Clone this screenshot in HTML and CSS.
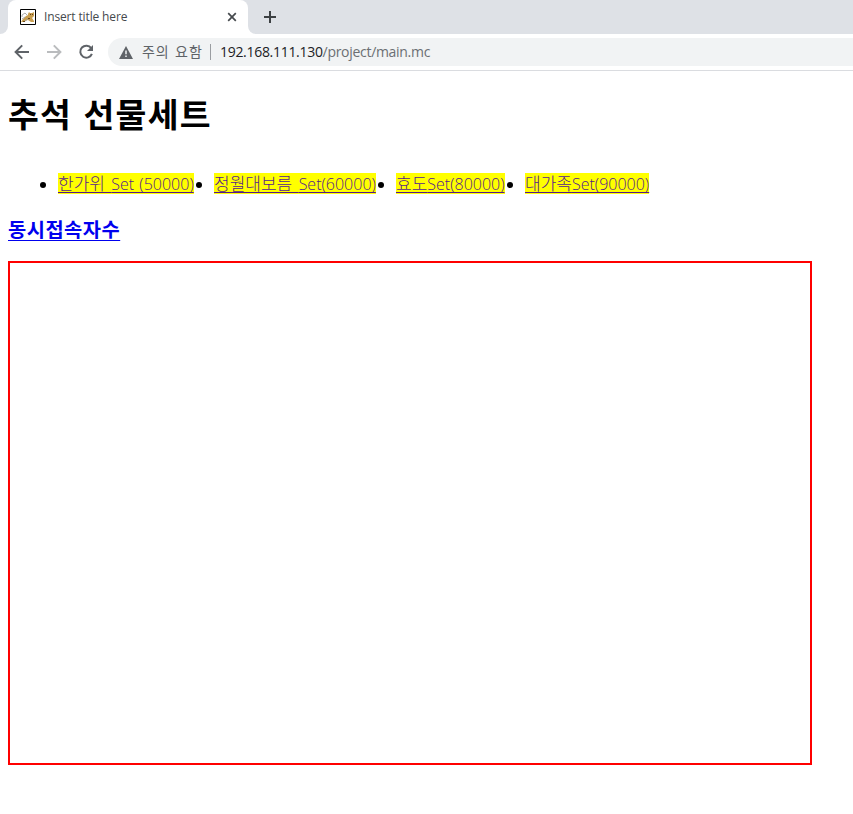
FILE: index.html
```html
<!DOCTYPE html>
<html lang="ko">
<head>
<meta charset="utf-8">
<title>Insert title here</title>
<link rel="stylesheet" href="styles.css">
</head>
<body>
<header class="browser">
  <div class="tabstrip">
    <div class="edge"></div>
    <div class="tab">
      <svg class="favicon" width="16" height="16" viewBox="0 0 16 16"><path fill="#fff" stroke="#000" d="M.5.5h15v15H.5z"/><path fill="#c99f51" d="M8 5l1-2 1 1h2l2-1v4l-2 2 2 3v1h-3l-3-2-3 1-2 1H1l2-3 3-3 2-1z"/><path fill="none" stroke="#999" stroke-width=".8" d="M2 8V6l3-2 2 2M2 10l3-2M5 12l3-2"/><path fill="#65431c" d="M10 5h1v1h-1zM12 5h1v1h-1zM8 9h2v1H8zM3 12h2v1H3z"/></svg>
      <span class="tab-title">Insert title here</span>
      <svg class="close" width="10" height="10" viewBox="0 0 10 10"><path d="M1.2 1.2l7.6 7.6M8.8 1.2L1.2 8.8" stroke="#45494d" stroke-width="1.7"/></svg>
    </div>
    <div class="rest"><svg width="12" height="12" viewBox="0 0 12 12"><path d="M6 0v12M0 6h12" stroke="#3c4043" stroke-width="2"/></svg></div>
  </div>
  <div class="toolbar">
    <svg class="nav" width="16" height="16" viewBox="0 0 16 16"><path d="M15 8H2M8.2 1.4L1.6 8l6.6 6.6" fill="none" stroke="#5f6368" stroke-width="2"/></svg>
    <svg class="nav" width="16" height="16" viewBox="0 0 16 16"><path d="M1 8h13M7.8 1.4L14.4 8l-6.6 6.6" fill="none" stroke="#babcbe" stroke-width="2"/></svg>
    <svg class="nav" width="16" height="16" viewBox="0 0 16 16"><path d="M13.2 4.2A6 6 0 1 0 13.9 9.8" fill="none" stroke="#5f6368" stroke-width="2"/><path d="M15 1v6H9z" fill="#5f6368"/></svg>
    <div class="omnibox">
      <svg class="warn" width="14" height="13" viewBox="0 0 14 13"><path fill="#5f6368" d="M7 0l7 13H0z"/><path d="M7 4.5v3.7M7 9.4v1.6" stroke="#f1f3f4" stroke-width="1.5"/></svg>
      <span class="notice">주의 요함</span><span class="divider"></span>
      <span class="url"><b>192.168.111.130</b>/project/main.mc</span>
    </div>
  </div>
</header>
<main>
  <h1>추석 선물세트</h1>
  <ul>
    <li><a class="w1" href="#">한가위 <i>Set (50000)</i></a></li>
    <li><a class="w2" href="#">정월대보름 <i>Set(60000)</i></a></li>
    <li><a class="w3" href="#">효도<i>Set(80000)</i></a></li>
    <li><a class="w4" href="#">대가족<i>Set(90000)</i></a></li>
  </ul>
  <h3><a href="#">동시접속자수</a></h3>
  <div class="frame"></div>
</main>
</body>
</html>
```
FILE: styles.css
```css
* { box-sizing: border-box; }
body { margin: 0; background: #fff; color: #000; font-family: "Open Sans", "Noto Sans CJK KR", sans-serif; white-space: nowrap; overflow: hidden; }
svg { display: block; flex: none; }
.browser { height: 71px; border-bottom: 1px solid #dadce0; }
.tabstrip { height: 34px; display: flex; }
.edge { width: 8px; background: #dee1e6; border-bottom-right-radius: 8px; }
.tab { width: 240px; display: flex; align-items: center; padding-left: 12px; background: linear-gradient(#dee1e6, #dee1e6) top / 100% 8px no-repeat; position: relative; z-index: 0; }
.tab::before { content: ""; position: absolute; z-index: -1; inset: 0; background: #fff; border-radius: 8px 8px 0 0; }
.tab-title { width: 183px; margin-left: 8px; font-size: 12px; line-height: 16px; letter-spacing: -.14px; color: #45494d; }
.rest { flex: 1; background: #dee1e6; border-bottom-left-radius: 8px; padding: 11px 0 0 16px; }
.toolbar { height: 36px; display: flex; align-items: center; padding-left: 14px; gap: 16px; }
.omnibox { flex: 1; height: 28px; margin-left: -2px; padding-left: 11px; display: flex; align-items: center; border-radius: 14px 0 0 14px; background: #f1f3f4; font-size: 14px; line-height: 20px; color: #5f6368; }
.notice { width: 61px; margin-left: 9px; font-size: 14px; letter-spacing: .9px; word-spacing: 1px; }
.divider { width: 1px; height: 16px; margin: 0 9px 0 7px; background: #9a9da1; }
.url { color: #6b6f73; letter-spacing: -.3px; }
.url b { font-weight: 400; color: #202124; }
main { padding: 0 8px; }
h1 { height: 48px; margin: 19px 0 0; font-size: 33.5px; line-height: 48px; letter-spacing: 1.3px; word-spacing: 1.2px; }
ul { height: 21px; margin: 35px 0 0; padding-left: 50px; display: flex; gap: 20px; list-style: none; font-size: 16px; }
li { position: relative; }
li::before { content: ""; position: absolute; left: -18px; top: 9px; width: 6px; height: 6px; border-radius: 50%; background: #000; }
a { text-decoration: underline; text-decoration-skip-ink: none; text-decoration-thickness: 1px; }
li a { display: block; height: 21px; line-height: 21px; background: #ff0; color: #551a8b; text-underline-offset: 2px; font-size: 17px; font-weight: 300; word-spacing: 2px; }
li i { font-size: 16px; font-style: normal; letter-spacing: 0; word-spacing: 0; }
.w1 { width: 136px; }
.w1 i { word-spacing: 1px; }
.w2 { width: 162px; }
.w3 { width: 109px; }
.w4 { width: 124px; }
h3 { height: 25px; margin: 24px 0 0; font-size: 19.8px; line-height: 23px; letter-spacing: .5px; }
h3 a { color: #00e; text-decoration-thickness: 1px; text-underline-offset: 3px; }
.frame { width: 804px; height: 504px; margin-top: 18px; border: 2px solid red; }
```
